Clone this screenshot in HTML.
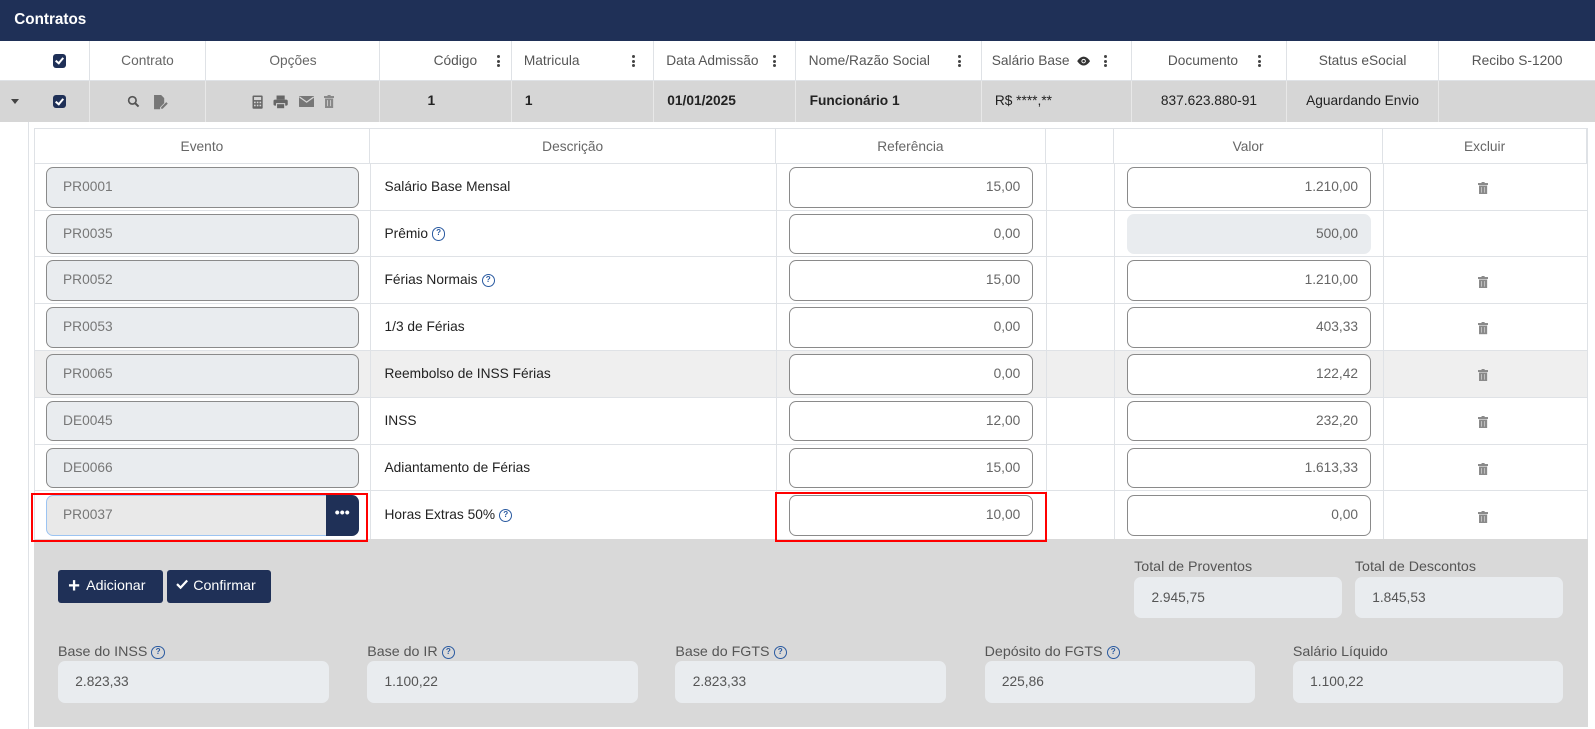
<!DOCTYPE html>
<html><head><meta charset="utf-8"><style>
*{box-sizing:border-box;margin:0;padding:0}
html,body{width:1595px;height:729px;overflow:hidden;background:#fff}
#w{position:absolute;left:0;top:0;width:1568px;height:717px;zoom:1.0172;font-family:"Liberation Sans",sans-serif;font-size:13.5px;color:#222}
.a{position:absolute}
.top{left:0;top:0;width:1568px;height:40px;background:#1f3057;color:#fff;font-weight:bold;font-size:15px;line-height:40px;padding-left:14px}
.hc{top:40px;height:40px;line-height:40px;text-align:center;color:#666;border-right:1px solid #dfe2e6;font-size:13.5px}
.dc{top:80px;height:40px;line-height:40px;background:#d6d6d6;border-right:1px solid #e8e8e8;color:#222}
.dots{display:inline-block;width:3px;vertical-align:middle;margin-left:20px}
.dots i{display:block;width:3px;height:3px;border-radius:50%;background:#444;margin:1.5px 0}
.cb{display:inline-block;width:13px;height:13px;border-radius:3px;background:#1f3057;vertical-align:middle;position:relative}
.cb:after{content:"";position:absolute;left:4px;top:2px;width:3px;height:6px;border:solid #fff;border-width:0 2px 2px 0;transform:rotate(40deg)}
.ih{top:126px;height:35px;line-height:35px;text-align:center;color:#666;border:1px solid #dfe2e6;border-left:none}
.row{left:33px;width:1527px;height:46px;border-bottom:1px solid #dfe2e6}
.vl{width:1px;background:#dfe2e6}
.ev{height:40px;border:1px solid #8a8a8a;border-radius:7px;background:#e9ecef;color:#777;line-height:38px;padding-left:16px}
.in{height:40px;border:1px solid #8a8a8a;border-radius:7px;background:#fff;color:#666;line-height:38px;text-align:right;padding-right:12px}
.ds{line-height:46px}
.q{display:inline-block;width:13px;height:13px;border:1.3px solid #2a5aa0;border-radius:50%;font-size:8px;line-height:10px;text-align:center;color:#2a5aa0;font-weight:bold;vertical-align:middle;margin-left:4px}
.tr{width:10px;height:12px}
.btn{top:560px;height:33px;background:#1f3057;color:#fff;border-radius:3px;line-height:33px;font-size:14px}
.lb{color:#555;font-size:14px}
.ro{height:41px;background:#e9ecef;border-radius:7px;color:#555;line-height:41px;padding-left:17px}
</style></head><body><div id="w">
<div class="a top">Contratos</div>
<div class="a hc" style="left:0;width:30px;border-right:none"></div>
<div class="a hc" style="left:30px;width:58px"><span class="cb"></span></div>
<div class="a hc" style="left:88px;width:115px">Contrato</div>
<div class="a hc" style="left:203px;width:171px">Opções</div>
<div class="a hc" style="left:374px;width:129px;text-align:right;padding-right:10px;color:#555">Código<span class="dots"><i></i><i></i><i></i></span></div>
<div class="a hc" style="left:503px;width:140px;text-align:left;padding-left:12px;color:#555">Matricula<span class="dots" style="margin-left:52px"><i></i><i></i><i></i></span></div>
<div class="a hc" style="left:643px;width:140px;text-align:left;padding-left:12px;color:#555">Data Admissão<span class="dots" style="margin-left:14px"><i></i><i></i><i></i></span></div>
<div class="a hc" style="left:783px;width:182px;text-align:left;padding-left:12px;color:#555">Nome/Razão Social<span class="dots" style="margin-left:28px"><i></i><i></i><i></i></span></div>
<div class="a hc" style="left:965px;width:148px;text-align:left;padding-left:10px;color:#555">Salário Base <svg width="15" height="12" viewBox="0 0 24 16" style="vertical-align:middle;margin-left:3px"><path d="M12 1C6 1 2 8 2 8s4 7 10 7 10-7 10-7-4-7-10-7z" fill="#333"/><circle cx="12" cy="8" r="3.5" fill="#fff"/><circle cx="12" cy="8" r="2" fill="#333"/></svg><span class="dots" style="margin-left:12px"><i></i><i></i><i></i></span></div>
<div class="a hc" style="left:1113px;width:152px;color:#555">&nbsp;&nbsp;&nbsp;Documento<span class="dots"><i></i><i></i><i></i></span></div>
<div class="a hc" style="left:1265px;width:150px;color:#555">Status eSocial</div>
<div class="a hc" style="left:1415px;width:153px;color:#555;border-right:none">Recibo S-1200</div>
<div class="a" style="left:0;top:79px;width:1568px;height:1px;background:#dfe2e6"></div>
<div class="a dc" style="left:0;width:30px;border-right:none"><span style="position:absolute;left:11px;top:17px;border:4px solid transparent;border-top:5px solid #444"></span></div>
<div class="a dc" style="left:30px;width:58px;text-align:center"><span class="cb"></span></div>
<div class="a dc" style="left:88px;width:115px;text-align:center">
<svg width="13" height="13" viewBox="0 0 16 16" style="vertical-align:middle;margin-right:12px"><circle cx="6.5" cy="6.5" r="4.5" fill="none" stroke="#555" stroke-width="2"/><path d="M10 10l4 4" stroke="#555" stroke-width="2.4"/></svg><svg width="16" height="16" viewBox="0 0 16 16" style="vertical-align:middle"><path d="M2 1h7l3 3v5l-4 4v2H2z" fill="#777"/><path d="M9 13l5-5 1.5 1.5-5 5H9z" fill="#777"/></svg></div>
<div class="a dc" style="left:203px;width:171px;text-align:center">
<svg width="11" height="14" viewBox="0 0 11 14" style="vertical-align:middle;margin-right:10px"><rect x="0.5" y="0.5" width="10" height="13" rx="1" fill="#666"/><rect x="2" y="2" width="7" height="3" fill="#d6d6d6"/><g fill="#d6d6d6"><rect x="2" y="6.5" width="1.6" height="1.6"/><rect x="4.7" y="6.5" width="1.6" height="1.6"/><rect x="7.4" y="6.5" width="1.6" height="1.6"/><rect x="2" y="9.5" width="1.6" height="1.6"/><rect x="4.7" y="9.5" width="1.6" height="1.6"/><rect x="7.4" y="9.5" width="1.6" height="1.6"/></g></svg><svg width="15" height="14" viewBox="0 0 15 14" style="vertical-align:middle;margin-right:10px"><rect x="3.5" y="0.5" width="8" height="4" fill="#666"/><rect x="0.5" y="4.5" width="14" height="6" rx="1.5" fill="#666"/><rect x="3.5" y="8.5" width="8" height="5" fill="#666" stroke="#d6d6d6" stroke-width="1"/></svg><svg width="15" height="11" viewBox="0 0 15 11" style="vertical-align:middle;margin-right:10px"><rect width="15" height="11" rx="1" fill="#777"/><path d="M0.5 1l7 5 7-5" fill="none" stroke="#d6d6d6" stroke-width="1.2"/></svg><svg width="10" height="13" viewBox="0 0 10 13" style="vertical-align:middle"><rect x="0" y="1" width="10" height="2" fill="#888"/><rect x="3.5" y="0" width="3" height="1.5" fill="#888"/><rect x="1" y="3.5" width="8" height="9.5" fill="#888"/><path d="M3.5 5v6M6.5 5v6" stroke="#d6d6d6" stroke-width="0.8"/></svg></div>
<div class="a dc" style="left:374px;width:129px;text-align:center;padding-right:28px;font-weight:bold">1</div>
<div class="a dc" style="left:503px;width:140px;padding-left:13px;font-weight:bold">1</div>
<div class="a dc" style="left:643px;width:140px;padding-left:13px;font-weight:bold">01/01/2025</div>
<div class="a dc" style="left:783px;width:182px;padding-left:13px;font-weight:bold">Funcionário 1</div>
<div class="a dc" style="left:965px;width:148px;padding-left:13px">R$ ****,**</div>
<div class="a dc" style="left:1113px;width:152px;text-align:center">837.623.880-91</div>
<div class="a dc" style="left:1265px;width:150px;text-align:center">Aguardando Envio</div>
<div class="a dc" style="left:1415px;width:153px;border-right:none"></div>
<div class="a" style="left:28px;top:120px;width:1px;height:597px;background:#dfe2e6"></div>
<div class="a ih" style="left:33px;width:331px;border-left:1px solid #dfe2e6">Evento</div>
<div class="a ih" style="left:364px;width:399px">Descrição</div>
<div class="a ih" style="left:763px;width:265px">Referência</div>
<div class="a ih" style="left:1028px;width:67px"></div>
<div class="a ih" style="left:1095px;width:265px">Valor</div>
<div class="a ih" style="left:1360px;width:200px">Excluir</div>
<div class="a row" style="top:161px"></div>
<div class="a row" style="top:207px"></div>
<div class="a row" style="top:253px"></div>
<div class="a row" style="top:299px"></div>
<div class="a row" style="top:345px;background:#efefef"></div>
<div class="a row" style="top:391px"></div>
<div class="a row" style="top:437px"></div>
<div class="a row" style="top:483px;height:47px;border-bottom:none"></div>
<div class="a vl" style="left:33px;top:161px;height:369px"></div>
<div class="a vl" style="left:364px;top:161px;height:369px"></div>
<div class="a vl" style="left:763px;top:161px;height:369px"></div>
<div class="a vl" style="left:1028px;top:161px;height:369px"></div>
<div class="a vl" style="left:1095px;top:161px;height:369px"></div>
<div class="a vl" style="left:1360px;top:161px;height:369px"></div>
<div class="a vl" style="left:1560px;top:126px;height:404px"></div>

<div class="a ev" style="left:45px;top:164px;width:308px">PR0001</div>
<div class="a ev" style="left:45px;top:210px;width:308px">PR0035</div>
<div class="a ev" style="left:45px;top:256px;width:308px">PR0052</div>
<div class="a ev" style="left:45px;top:302px;width:308px">PR0053</div>
<div class="a ev" style="left:45px;top:348px;width:308px">PR0065</div>
<div class="a ev" style="left:45px;top:394px;width:308px">DE0045</div>
<div class="a ev" style="left:45px;top:440px;width:308px">DE0066</div>
<div class="a ev" style="left:45px;top:487px;width:276px;border-color:#9cc4f2;border-radius:7px 0 0 7px;background:#e9e9e9">PR0037</div>
<div class="a" style="left:320px;top:487px;width:33px;height:40px;background:#1f3057;border-radius:0 7px 7px 0;color:#fff;text-align:center;line-height:36px;font-weight:bold;font-size:14px">•••</div>

<div class="a ds" style="left:378px;top:161px">Salário Base Mensal</div>
<div class="a ds" style="left:378px;top:207px">Prêmio<span class="q">?</span></div>
<div class="a ds" style="left:378px;top:253px">Férias Normais<span class="q">?</span></div>
<div class="a ds" style="left:378px;top:299px">1/3 de Férias</div>
<div class="a ds" style="left:378px;top:345px">Reembolso de INSS Férias</div>
<div class="a ds" style="left:378px;top:391px">INSS</div>
<div class="a ds" style="left:378px;top:437px">Adiantamento de Férias</div>
<div class="a ds" style="left:378px;top:484px">Horas Extras 50%<span class="q">?</span></div>

<div class="a in" style="left:776px;top:164px;width:240px">15,00</div>
<div class="a in" style="left:776px;top:210px;width:240px">0,00</div>
<div class="a in" style="left:776px;top:256px;width:240px">15,00</div>
<div class="a in" style="left:776px;top:302px;width:240px">0,00</div>
<div class="a in" style="left:776px;top:348px;width:240px">0,00</div>
<div class="a in" style="left:776px;top:394px;width:240px">12,00</div>
<div class="a in" style="left:776px;top:440px;width:240px">15,00</div>
<div class="a in" style="left:776px;top:487px;width:240px">10,00</div>

<div class="a in" style="left:1108px;top:164px;width:240px">1.210,00</div>
<div class="a in" style="left:1108px;top:210px;width:240px;background:#e9ecef;border-color:#e9ecef">500,00</div>
<div class="a in" style="left:1108px;top:256px;width:240px">1.210,00</div>
<div class="a in" style="left:1108px;top:302px;width:240px">403,33</div>
<div class="a in" style="left:1108px;top:348px;width:240px">122,42</div>
<div class="a in" style="left:1108px;top:394px;width:240px">232,20</div>
<div class="a in" style="left:1108px;top:440px;width:240px">1.613,33</div>
<div class="a in" style="left:1108px;top:487px;width:240px">0,00</div>

<svg class="a tr" style="left:1453px;top:179px" viewBox="0 0 10 12"><rect y="1" width="10" height="2" fill="#8a8a8a"/><rect x="3.5" width="3" height="1.5" fill="#8a8a8a"/><rect x="1" y="3.5" width="8" height="8.5" fill="#8a8a8a"/><path d="M3.5 5v5.5M6.5 5v5.5" stroke="#ccc" stroke-width="0.8"/></svg>
<svg class="a tr" style="left:1453px;top:271px" viewBox="0 0 10 12"><rect y="1" width="10" height="2" fill="#8a8a8a"/><rect x="3.5" width="3" height="1.5" fill="#8a8a8a"/><rect x="1" y="3.5" width="8" height="8.5" fill="#8a8a8a"/><path d="M3.5 5v5.5M6.5 5v5.5" stroke="#ccc" stroke-width="0.8"/></svg>
<svg class="a tr" style="left:1453px;top:317px" viewBox="0 0 10 12"><rect y="1" width="10" height="2" fill="#8a8a8a"/><rect x="3.5" width="3" height="1.5" fill="#8a8a8a"/><rect x="1" y="3.5" width="8" height="8.5" fill="#8a8a8a"/><path d="M3.5 5v5.5M6.5 5v5.5" stroke="#ccc" stroke-width="0.8"/></svg>
<svg class="a tr" style="left:1453px;top:363px" viewBox="0 0 10 12"><rect y="1" width="10" height="2" fill="#8a8a8a"/><rect x="3.5" width="3" height="1.5" fill="#8a8a8a"/><rect x="1" y="3.5" width="8" height="8.5" fill="#8a8a8a"/><path d="M3.5 5v5.5M6.5 5v5.5" stroke="#ccc" stroke-width="0.8"/></svg>
<svg class="a tr" style="left:1453px;top:409px" viewBox="0 0 10 12"><rect y="1" width="10" height="2" fill="#8a8a8a"/><rect x="3.5" width="3" height="1.5" fill="#8a8a8a"/><rect x="1" y="3.5" width="8" height="8.5" fill="#8a8a8a"/><path d="M3.5 5v5.5M6.5 5v5.5" stroke="#ccc" stroke-width="0.8"/></svg>
<svg class="a tr" style="left:1453px;top:455px" viewBox="0 0 10 12"><rect y="1" width="10" height="2" fill="#8a8a8a"/><rect x="3.5" width="3" height="1.5" fill="#8a8a8a"/><rect x="1" y="3.5" width="8" height="8.5" fill="#8a8a8a"/><path d="M3.5 5v5.5M6.5 5v5.5" stroke="#ccc" stroke-width="0.8"/></svg>
<svg class="a tr" style="left:1453px;top:502px" viewBox="0 0 10 12"><rect y="1" width="10" height="2" fill="#8a8a8a"/><rect x="3.5" width="3" height="1.5" fill="#8a8a8a"/><rect x="1" y="3.5" width="8" height="8.5" fill="#8a8a8a"/><path d="M3.5 5v5.5M6.5 5v5.5" stroke="#ccc" stroke-width="0.8"/></svg>

<div class="a" style="left:33px;top:530px;width:1528px;height:185px;background:#d9d9d9"></div>
<div class="a" style="left:30px;top:485px;width:332px;height:48px;border:2.5px solid #f00"></div>
<div class="a" style="left:762px;top:484px;width:267px;height:49px;border:2.5px solid #f00"></div>
<div class="a btn" style="left:57px;width:103px;padding-left:10px"><span style="font-size:20px;font-weight:bold;vertical-align:-2px;margin-right:6px">+</span>Adicionar</div>
<div class="a btn" style="left:164px;width:102px;padding-left:9px"><svg width="12" height="10" viewBox="0 0 12 10" style="margin-right:5px"><path d="M1 5l3.5 3.5L11 1.5" fill="none" stroke="#fff" stroke-width="2.2"/></svg>Confirmar</div>
<div class="a lb" style="left:1115px;top:550px">Total de Proventos</div>
<div class="a lb" style="left:1332px;top:550px">Total de Descontos</div>
<div class="a ro" style="left:1115px;top:567px;width:204px">2.945,75</div>
<div class="a ro" style="left:1332px;top:567px;width:205px">1.845,53</div>
<div class="a lb" style="left:57px;top:633px">Base do INSS<span class="q">?</span></div>
<div class="a lb" style="left:361px;top:633px">Base do IR<span class="q">?</span></div>
<div class="a lb" style="left:664px;top:633px">Base do FGTS<span class="q">?</span></div>
<div class="a lb" style="left:968px;top:633px">Depósito do FGTS<span class="q">?</span></div>
<div class="a lb" style="left:1271px;top:633px">Salário Líquido</div>
<div class="a ro" style="left:57px;top:650px;width:266px">2.823,33</div>
<div class="a ro" style="left:361px;top:650px;width:266px">1.100,22</div>
<div class="a ro" style="left:664px;top:650px;width:266px">2.823,33</div>
<div class="a ro" style="left:968px;top:650px;width:266px">225,86</div>
<div class="a ro" style="left:1271px;top:650px;width:266px">1.100,22</div>
</div></body></html>
